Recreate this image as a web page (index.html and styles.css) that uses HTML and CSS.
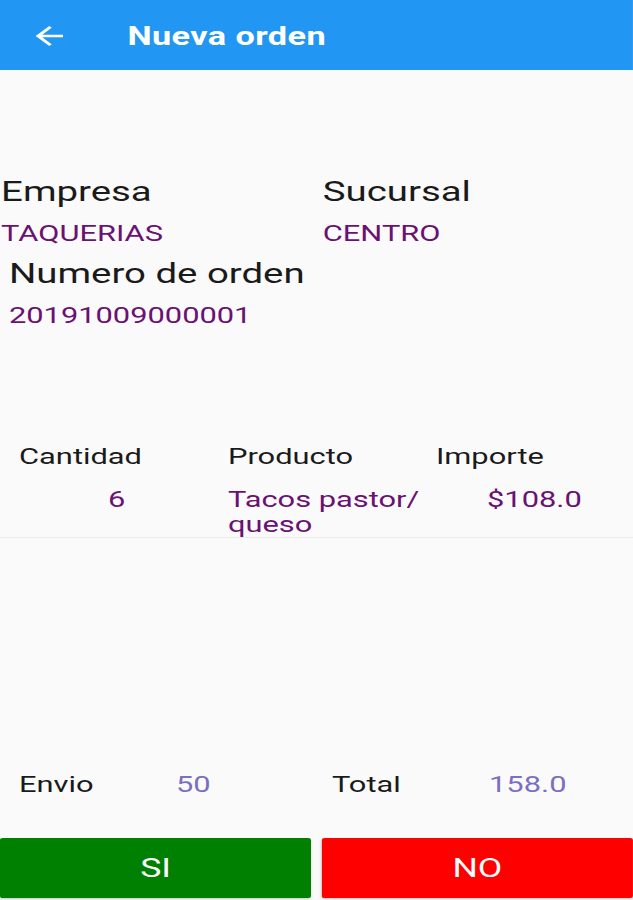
FILE: index.html
```html
<!DOCTYPE html>
<html lang="es">
<head>
    <meta charset="UTF-8">
    <title>Nueva orden</title>
    <link rel="stylesheet" href="styles.css">
</head>
<body>
    <div class="screen">
        <header class="app-bar">
            <svg class="back-icon" width="30" height="30" viewBox="0 0 24 24">
                <path d="M20 11H7.83l5.59-5.59L12 4l-8 8 8 8 1.41-1.41L7.83 13H20v-2z" fill="#fff"/>
            </svg>
            <h1>Nueva orden</h1>
        </header>

        <main class="content">
            <section class="info">
                <div class="info-row">
                    <div class="field">
                        <div class="label">Empresa</div>
                        <div class="value">TAQUERIAS</div>
                    </div>
                    <div class="field">
                        <div class="label">Sucursal</div>
                        <div class="value">CENTRO</div>
                    </div>
                </div>
                <div class="field order-number">
                    <div class="label">Numero de orden</div>
                    <div class="value">20191009000001</div>
                </div>
            </section>

            <section class="items">
                <div class="items-head">
                    <span class="col-qty">Cantidad</span>
                    <span>Producto</span>
                    <span>Importe</span>
                </div>
                <div class="item-row">
                    <span class="qty">6</span>
                    <span class="product">Tacos pastor/<br>queso</span>
                    <span class="amount">$108.0</span>
                </div>
            </section>

            <section class="totals">
                <span class="total-label">Envio</span>
                <span class="total-value">50</span>
                <span class="total-label">Total</span>
                <span class="total-value">158.0</span>
            </section>
        </main>

        <footer class="actions">
            <button class="btn btn-yes">SI</button>
            <button class="btn btn-no">NO</button>
        </footer>
    </div>
</body>
</html>
```

FILE: styles.css
```css
body {
    font-family: Roboto, "Noto Sans", sans-serif;
    background-color: #fafafa;
    margin: 0;
    padding: 0;
    overflow: hidden;
}

/* the app screen is captured stretched sideways */
.screen {
    width: 462px;
    height: 900px;
    display: flex;
    flex-direction: column;
    transform: scaleX(1.37);
    transform-origin: 0 0;
}

.app-bar {
    background-color: #2196f3;
    height: 70px;
    flex-shrink: 0;
    display: flex;
    align-items: center;
    box-sizing: border-box;
    padding-left: 20.5px;
    padding-top: 2px;
}

.back-icon {
    margin-right: 42.5px;
}

.app-bar h1 {
    margin: 0;
    color: white;
    font-size: 25px;
    font-weight: bold;
    letter-spacing: 0.3px;
}

.content {
    flex: 1;
    display: flex;
    flex-direction: column;
}

.info {
    padding-top: 104px;
}

.info-row {
    display: flex;
    padding-left: 0.8px;
}

.info-row .field:first-child {
    width: 234.8px;
    flex-shrink: 0;
}

.label {
    font-size: 28px;
    color: #1a1a1a;
    line-height: 36px;
}

.value {
    font-size: 22.5px;
    color: #6a1172;
    line-height: 46px;
}

.order-number {
    padding-left: 6.5px;
}

.items {
    margin-top: 103px;
    border-bottom: 1px solid #ebebeb;
}

.items-head,
.item-row {
    display: grid;
    grid-template-columns: 166.4px 151.8px 1fr;
    font-size: 22.5px;
}

.items-head {
    color: #1a1a1a;
    line-height: 30px;
}

.col-qty {
    padding-left: 13.9px;
}

.item-row {
    color: #6a1172;
    line-height: 25px;
    margin-top: 16px;
}

.qty {
    padding-left: 78.8px;
}

.amount {
    padding-left: 37.3px;
}

.totals {
    margin-top: auto;
    margin-bottom: 37.7px;
    display: grid;
    grid-template-columns: 114.6px 113.8px 114.7px 1fr;
    padding-left: 13.9px;
    font-size: 22.5px;
    line-height: 32px;
}

.total-label {
    color: #1a1a1a;
}

.total-value {
    color: #7b6fc2;
}

.actions {
    display: flex;
    gap: 7.7px;
    height: 60px;
    margin-bottom: 2px;
    flex-shrink: 0;
}

.btn {
    flex: 1;
    border: none;
    border-radius: 2px;
    color: white;
    font-family: Roboto, "Noto Sans", sans-serif;
    font-size: 26px;
    padding: 0;
    cursor: pointer;
    box-shadow: 0 1px 2px rgba(0, 0, 0, 0.2);
}

.btn-yes {
    background-color: #008000;
}

.btn-no {
    background-color: #ff0000;
}
```
